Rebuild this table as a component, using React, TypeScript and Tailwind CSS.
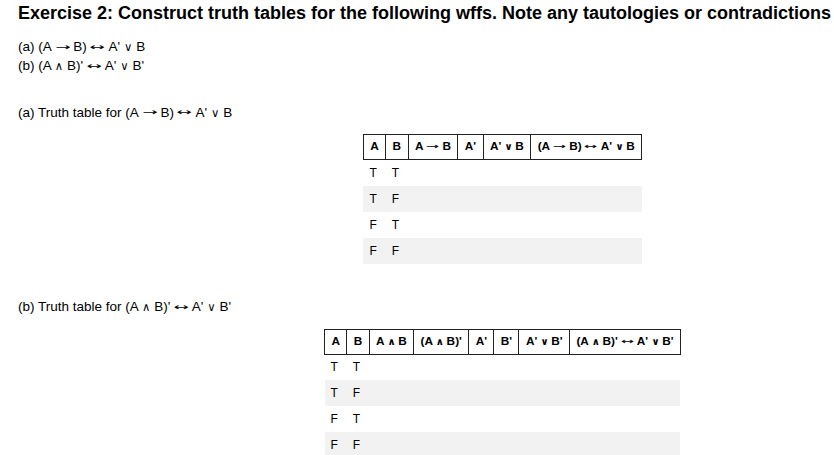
import React from 'react';

const rows = [
  ['T', 'T'],
  ['T', 'F'],
  ['F', 'T'],
  ['F', 'F'],
];

// Liberation Sans draws arrows tiny, so take them from DejaVu, stretched long and thin
const Fx = ({ text }: { text: string }) => {
  const parts = text.split(/([→↔∧∨])/);
  return (
    <>
      {parts.map((p, i) => {
        if (p === '→' || p === '↔')
          return (
            <span key={i} className="inline-block w-[1.1em] text-center font-['DejaVu_Sans'] font-normal">
              <span className="inline-block scale-x-[1.35] scale-y-[0.7]">{p}</span>
            </span>
          );
        if (p === '∧' || p === '∨')
          return (
            <span key={i} className="inline-block w-[0.75em] text-center text-[0.85em]">{p}</span>
          );
        return <React.Fragment key={i}>{p}</React.Fragment>;
      })}
    </>
  );
};

const TruthTable = ({ headers }: { headers: string[] }) => {
  return (
    <table className="mx-auto border-collapse text-[11.8px] text-black">
      <thead>
        <tr className="h-[25px]">
          {headers.map((h) => (
            <th key={h} className="border border-[#222] px-[6.4px] font-bold whitespace-nowrap text-center">
              <Fx text={h} />
            </th>
          ))}
        </tr>
      </thead>
      <tbody>
        {rows.map((r, i) => (
          <tr key={i} className={`h-[26px] ${i % 2 === 1 ? 'bg-[#f2f2f2]' : ''}`}>
            {headers.map((h, j) => (
              <td key={h} className="px-[6px] text-left text-[12px]">
                {j < 2 ? r[j] : ''}
              </td>
            ))}
          </tr>
        ))}
      </tbody>
    </table>
  );
};

export default function App() {
  return (
    <div className="w-[834px] h-[455px] overflow-hidden bg-white text-black font-['Liberation_Sans','DejaVu_Sans',sans-serif]">
      <div className="w-[987px] pl-[18px] pt-[3px]">
        {/* Title */}
        <h1 className="text-[18px] font-bold leading-[20px] whitespace-nowrap">
          Exercise 2: Construct truth tables for the following wffs. Note any tautologies or contradictions
        </h1>

        {/* Formulas */}
        <div className="mt-[14px] text-[13.5px] leading-[18px]">
          <p><Fx text="(a) (A → B) ↔ A' ∨ B" /></p>
          <p><Fx text="(b) (A ∧ B)' ↔ A' ∨ B'" /></p>
        </div>

        {/* Part a */}
        <p className="mt-[28px] text-[13.5px] leading-[18px]"><Fx text="(a) Truth table for (A → B) ↔ A' ∨ B" /></p>
        <div className="mt-[12px]">
          <TruthTable headers={['A', 'B', 'A → B', "A'", "A' ∨ B", "(A → B) ↔ A' ∨ B"]} />
        </div>

        {/* Part b */}
        <p className="mt-[33px] text-[13.5px] leading-[18px]"><Fx text="(b) Truth table for (A ∧ B)' ↔ A' ∨ B'" /></p>
        <div className="mt-[13px]">
          <TruthTable headers={['A', 'B', 'A ∧ B', "(A ∧ B)'", "A'", "B'", "A' ∨ B'", "(A ∧ B)' ↔ A' ∨ B'"]} />
        </div>
      </div>
    </div>
  );
}
